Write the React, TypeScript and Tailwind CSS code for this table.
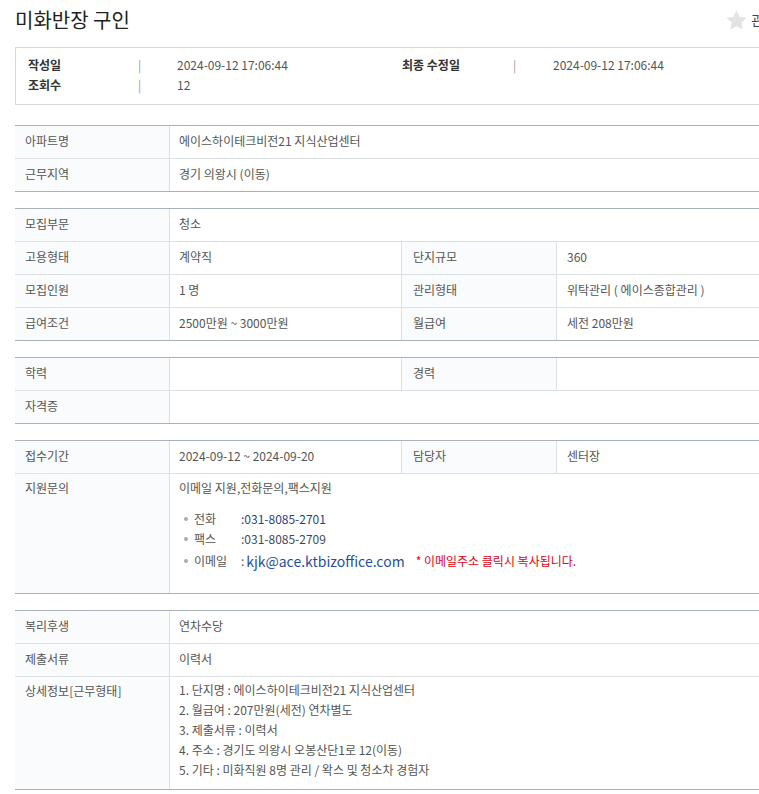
import React from 'react';

const font = { fontFamily: '"Noto Sans CJK KR", "Noto Sans", sans-serif' };

type Cell = { label: string; value?: React.ReactNode };

function Row({ cells, tall }: { cells: Cell[]; tall?: boolean }) {
  if (cells.length === 1) {
    const c = cells[0];
    return (
      <div className="flex border-t border-[#dcdfe3] first:border-t-0">
        <div
          className={`w-[155px] shrink-0 border-r border-[#dcdfe3] bg-[#f9fbfd] pl-[10px] ${
            tall ? 'pt-[5px]' : 'flex h-[32px] items-center pb-[2px]'
          }`}
        >
          {c.label}
        </div>
        <div className={`flex-1 pl-[9px] ${tall ? '' : 'flex h-[32px] items-center pb-[2px]'}`}>{c.value}</div>
      </div>
    );
  }
  return (
    <div className="flex border-t border-[#dcdfe3] first:border-t-0">
      <div className="flex h-[32px] w-[155px] shrink-0 items-center border-r border-[#dcdfe3] bg-[#f9fbfd] pb-[2px] pl-[10px]">
        {cells[0].label}
      </div>
      <div className="flex h-[32px] w-[232px] shrink-0 items-center border-r border-[#dcdfe3] pb-[2px] pl-[9px]">
        {cells[0].value}
      </div>
      <div className="flex h-[32px] w-[155px] shrink-0 items-center border-r border-[#dcdfe3] bg-[#f9fbfd] pb-[2px] pl-[11px]">
        {cells[1].label}
      </div>
      <div className="flex h-[32px] flex-1 items-center pb-[2px] pl-[10px]">{cells[1].value}</div>
    </div>
  );
}

function Table({ children, first }: { children: React.ReactNode; first?: boolean }) {
  return (
    <div
      className={`w-[744px] border-y border-[#a9b1ba] text-[12px] text-[#555] ${first ? 'mt-[20px]' : 'mt-[16px]'}`}
    >
      {children}
    </div>
  );
}

function StarIcon() {
  return (
    <svg width="21" height="20" viewBox="0 0 24 23" aria-hidden>
      <path d="M12 0.5l3.5 7.3 8 1.1-5.8 5.5 1.5 8L12 18.6l-7.2 3.8 1.5-8L0.5 8.9l8-1.1z" fill="#e3e3e3" />
    </svg>
  );
}

export default function App() {
  return (
    <div className="h-[794px] w-[759px] overflow-hidden bg-white" style={font}>
      <div className="w-[820px] pl-[15px]">
        {/* title */}
        <div className="flex h-[40px] items-center">
          <h1 className="text-[20px] font-normal text-[#222]">미화반장 구인</h1>
          <div className="ml-auto flex items-center gap-[4px] pr-[21px] text-[13px] text-[#444]">
            <StarIcon />
            <span>관심공고</span>
          </div>
        </div>

        {/* meta box */}
        <div className="mt-[7px] h-[58px] w-[805px] border border-[#d9d9d9] pl-[12px] pt-[7px] text-[12px] text-[#555]">
          <div className="flex h-[20px] items-center">
            <span className="w-[110px] font-semibold text-[#333]">작성일</span>
            <span className="w-[39px] text-[#999]">|</span>
            <span className="w-[225px]">2024-09-12 17:06:44</span>
            <span className="w-[111px] font-semibold text-[#333]">최종 수정일</span>
            <span className="w-[40px] text-[#999]">|</span>
            <span>2024-09-12 17:06:44</span>
          </div>
          <div className="flex h-[20px] items-center">
            <span className="w-[110px] font-semibold text-[#333]">조회수</span>
            <span className="w-[39px] text-[#999]">|</span>
            <span>12</span>
          </div>
        </div>

        <Table first>
          <Row cells={[{ label: '아파트명', value: '에이스하이테크비전21 지식산업센터' }]} />
          <Row cells={[{ label: '근무지역', value: '경기  의왕시 (이동)' }]} />
        </Table>

        <Table>
          <Row cells={[{ label: '모집부문', value: '청소' }]} />
          <Row cells={[{ label: '고용형태', value: '계약직' }, { label: '단지규모', value: '360' }]} />
          <Row cells={[{ label: '모집인원', value: '1 명' }, { label: '관리형태', value: '위탁관리 ( 에이스종합관리 )' }]} />
          <Row cells={[{ label: '급여조건', value: '2500만원 ~ 3000만원' }, { label: '월급여', value: '세전 208만원' }]} />
        </Table>

        <Table>
          <Row cells={[{ label: '학력', value: '' }, { label: '경력', value: '' }]} />
          <Row cells={[{ label: '자격증', value: '' }]} />
        </Table>

        <Table>
          <Row cells={[{ label: '접수기간', value: '2024-09-12 ~ 2024-09-20' }, { label: '담당자', value: '센터장' }]} />
          <Row
            tall
            cells={[
              {
                label: '지원문의',
                value: (
                  <div className="h-[119px] pt-[5px]">
                    <div>이메일 지원,전화문의,팩스지원</div>
                    <ul className="mt-[12px] pl-[5px]">
                      <li className="flex h-[20px] items-center">
                        <span className="mr-[6px] h-[4px] w-[4px] rounded-full bg-[#aaa]" />
                        <span className="w-[47px]">전화</span>
                        <span className="text-[#1f3f8f]">:031-8085-2701</span>
                      </li>
                      <li className="flex h-[20px] items-center">
                        <span className="mr-[6px] h-[4px] w-[4px] rounded-full bg-[#aaa]" />
                        <span className="w-[47px]">팩스</span>
                        <span className="text-[#3a4a66]">:031-8085-2709</span>
                      </li>
                      <li className="flex h-[24px] items-center">
                        <span className="mr-[6px] h-[4px] w-[4px] rounded-full bg-[#aaa]" />
                        <span className="w-[47px]">이메일</span>
                        <span>:</span>
                        <span className="ml-[2px] text-[14px] text-[#1f4fa3]">kjk@ace.ktbizoffice.com</span>
                        <span className="ml-[11px] text-[#e60012]">* 이메일주소 클릭시 복사됩니다.</span>
                      </li>
                    </ul>
                  </div>
                ),
              },
            ]}
          />
        </Table>

        <Table>
          <Row cells={[{ label: '복리후생', value: '연차수당' }]} />
          <Row cells={[{ label: '제출서류', value: '이력서' }]} />
          <Row
            tall
            cells={[
              {
                label: '상세정보[근무형태]',
                value: (
                  <div className="h-[112px] pt-[3px] leading-[20px]">
                    <div>1. 단지명 : 에이스하이테크비전21 지식산업센터</div>
                    <div>2. 월급여 : 207만원(세전) 연차별도</div>
                    <div>3. 제출서류 : 이력서</div>
                    <div>4. 주소 : 경기도 의왕시 오봉산단1로 12(이동)</div>
                    <div>5. 기타 : 미화직원 8명 관리 / 왁스 및 청소차 경험자</div>
                  </div>
                ),
              },
            ]}
          />
        </Table>
      </div>
    </div>
  );
}
